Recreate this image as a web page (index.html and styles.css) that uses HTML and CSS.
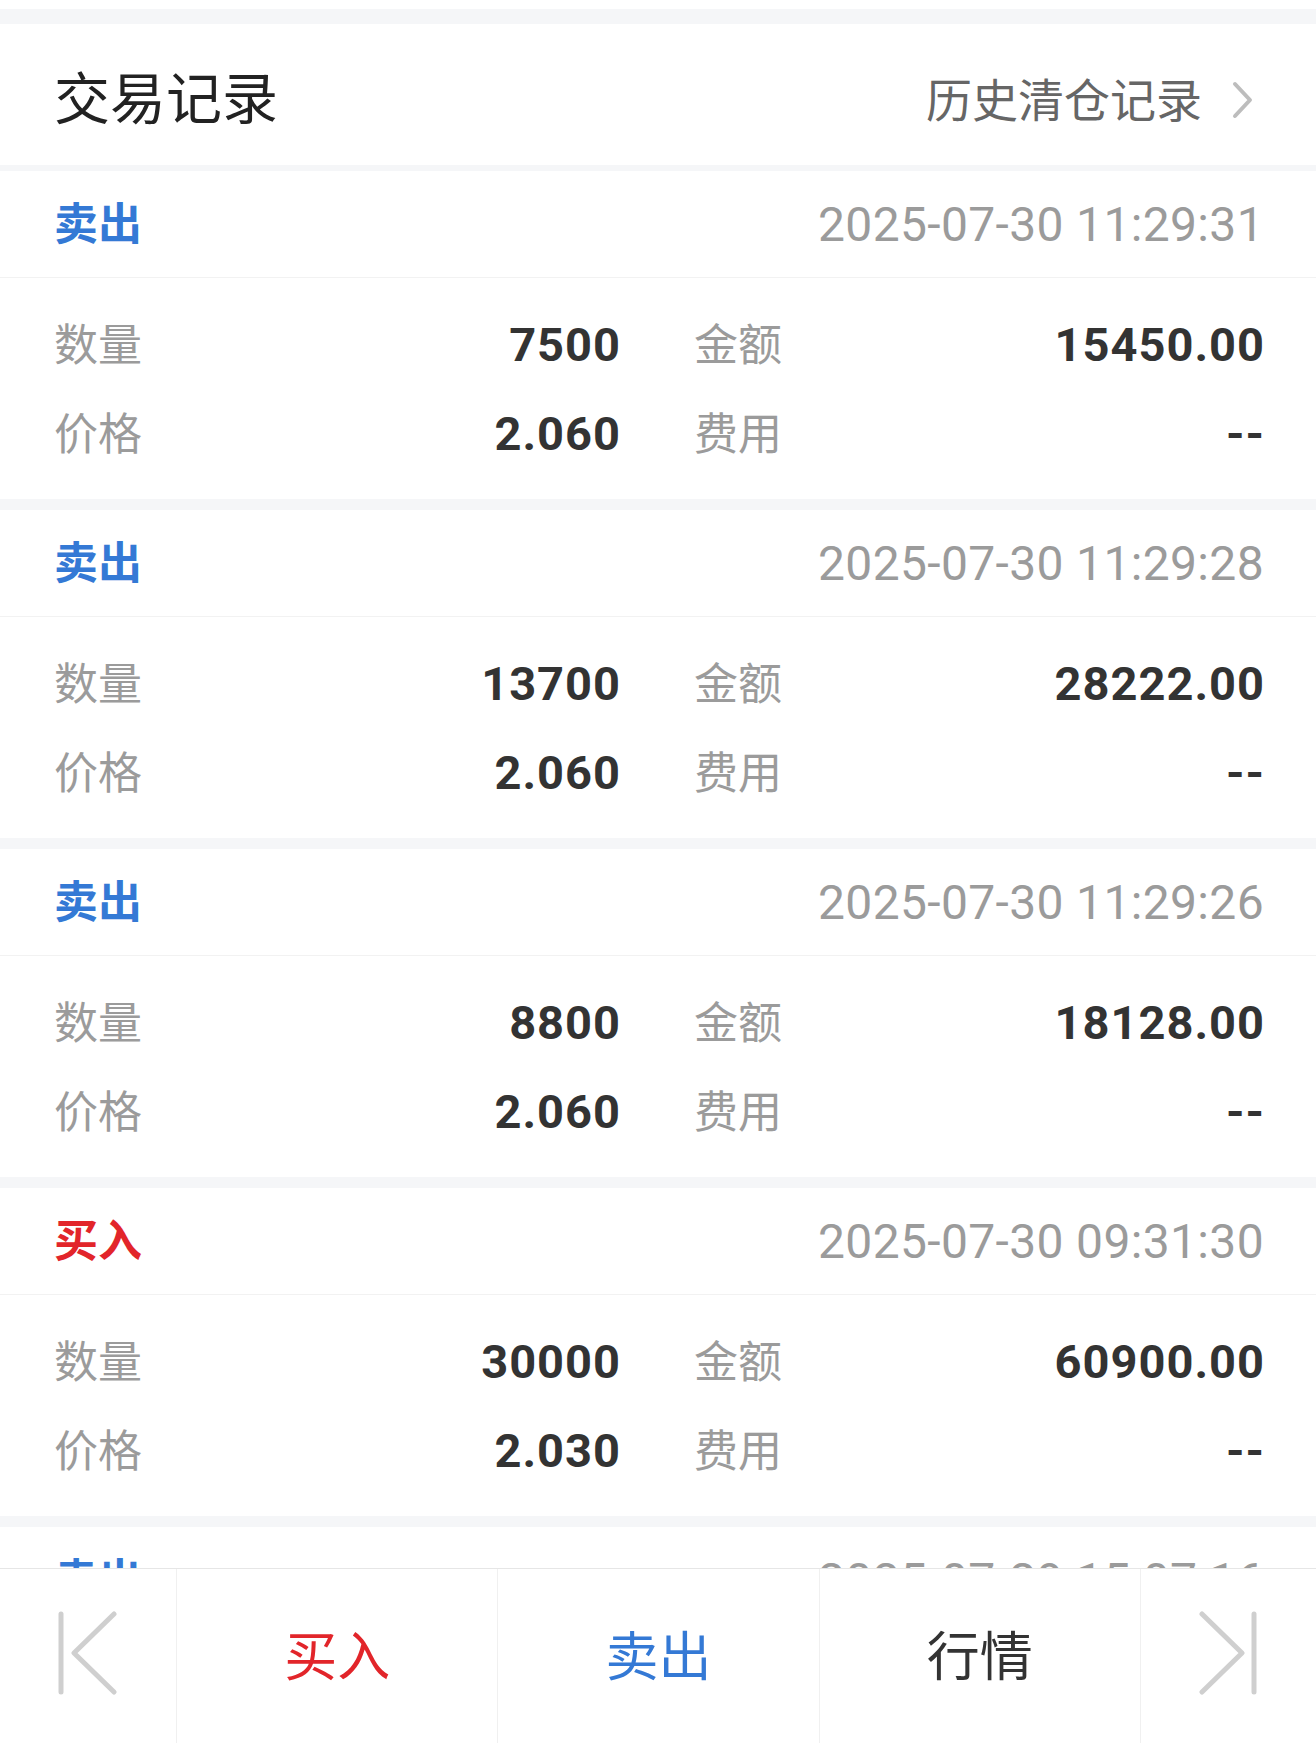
FILE: index.html
```html
<!DOCTYPE html>
<html lang="zh-CN">
<head>
  <meta charset="UTF-8">
  <title>交易记录</title>
  <link rel="stylesheet" href="styles.css">
</head>
<body>

<div class="page">
  <div class="scroll-area">
    <div class="list-head">
      <span class="list-title">交易记录</span>
      <a href="javascript:;" class="history-link">历史清仓记录
        <svg class="arrow-right" width="24" height="38" viewBox="0 0 24 38">
          <polyline points="4,3 19,19 4,35" fill="none" stroke="#bdbdbd" stroke-width="4" stroke-linecap="round" stroke-linejoin="round"/>
        </svg>
      </a>
    </div>

    <div class="trade">
      <div class="trade-top">
        <span class="trade-type sell">卖出</span>
        <span class="trade-time">2025-07-30 11:29:31</span>
      </div>
      <div class="trade-body">
        <div class="cell"><span class="label">数量</span><span class="value">7500</span></div>
        <div class="cell"><span class="label">金额</span><span class="value">15450.00</span></div>
        <div class="cell"><span class="label">价格</span><span class="value">2.060</span></div>
        <div class="cell"><span class="label">费用</span><span class="value">--</span></div>
      </div>
    </div>

    <div class="trade">
      <div class="trade-top">
        <span class="trade-type sell">卖出</span>
        <span class="trade-time">2025-07-30 11:29:28</span>
      </div>
      <div class="trade-body">
        <div class="cell"><span class="label">数量</span><span class="value">13700</span></div>
        <div class="cell"><span class="label">金额</span><span class="value">28222.00</span></div>
        <div class="cell"><span class="label">价格</span><span class="value">2.060</span></div>
        <div class="cell"><span class="label">费用</span><span class="value">--</span></div>
      </div>
    </div>

    <div class="trade">
      <div class="trade-top">
        <span class="trade-type sell">卖出</span>
        <span class="trade-time">2025-07-30 11:29:26</span>
      </div>
      <div class="trade-body">
        <div class="cell"><span class="label">数量</span><span class="value">8800</span></div>
        <div class="cell"><span class="label">金额</span><span class="value">18128.00</span></div>
        <div class="cell"><span class="label">价格</span><span class="value">2.060</span></div>
        <div class="cell"><span class="label">费用</span><span class="value">--</span></div>
      </div>
    </div>

    <div class="trade">
      <div class="trade-top">
        <span class="trade-type buy">买入</span>
        <span class="trade-time">2025-07-30 09:31:30</span>
      </div>
      <div class="trade-body">
        <div class="cell"><span class="label">数量</span><span class="value">30000</span></div>
        <div class="cell"><span class="label">金额</span><span class="value">60900.00</span></div>
        <div class="cell"><span class="label">价格</span><span class="value">2.030</span></div>
        <div class="cell"><span class="label">费用</span><span class="value">--</span></div>
      </div>
    </div>

    <!-- 被底部工具栏遮住一半的下一条 -->
    <div class="trade">
      <div class="trade-top">
        <span class="trade-type sell">卖出</span>
        <span class="trade-time">2025-07-29 15:07:16</span>
      </div>
    </div>
  </div>

  <div class="toolbar">
    <div class="tool-btn">
      <svg width="62" height="84" viewBox="0 0 62 84">
        <g fill="none" stroke="#cfcfcf" stroke-width="5" stroke-linecap="round" stroke-linejoin="round">
          <line x1="4" y1="3" x2="4" y2="81"/>
          <polyline points="57,3 17,42 57,81"/>
        </g>
      </svg>
    </div>
    <div class="tool-btn buy-btn">买入</div>
    <div class="tool-btn sell-btn">卖出</div>
    <div class="tool-btn quote-btn">行情</div>
    <div class="tool-btn">
      <svg width="62" height="84" viewBox="0 0 62 84">
        <g fill="none" stroke="#cfcfcf" stroke-width="5" stroke-linecap="round" stroke-linejoin="round">
          <line x1="56" y1="3" x2="56" y2="81"/>
          <polyline points="4,3 44,42 4,81"/>
        </g>
      </svg>
    </div>
  </div>
</div>

</body>
</html>
```

FILE: styles.css
```css
body {
  margin: 0;
  background: #fff;
  font-family: Roboto, "Noto Sans CJK SC", sans-serif;
}

.page {
  height: 1743px;
  display: flex;
  flex-direction: column;
  padding-top: 9px;
  box-sizing: border-box;
}

.scroll-area {
  flex: 1;
  overflow: hidden;
  background: #f5f6f8;
  padding-top: 15px;
}

.list-head {
  height: 141px;
  margin-bottom: 6px;
  padding: 0 54px;
  background: #fff;
  display: flex;
  align-items: center;
  justify-content: space-between;
}

.list-title {
  font-size: 56px;
  color: #222;
}

.history-link {
  display: flex;
  align-items: center;
  gap: 29px;
  padding-top: 4px;
  margin-right: 7px;
  font-size: 46px;
  color: #666;
  text-decoration: none;
}

.arrow-right {
  margin-top: 6px;
}

.trade {
  background: #fff;
  margin-bottom: 11px;
}

.trade-top {
  height: 106px;
  padding: 0 52px 0 54px;
  display: flex;
  align-items: center;
  justify-content: space-between;
  border-bottom: 1px solid #f2f2f2;
}

.trade-type {
  font-size: 44px;
  font-weight: bold;
  padding-bottom: 6px;
}

.trade-type.sell {
  color: #3479d5;
}

.trade-type.buy {
  color: #e2252a;
}

.trade-time {
  font-size: 48px;
  color: #9b9b9b;
  letter-spacing: 0.35px;
}

.trade-body {
  padding: 22px 52px 21px 54px;
  display: grid;
  grid-template-columns: 566px 1fr;
  column-gap: 74px;
}

.cell {
  height: 89px;
  display: flex;
  align-items: center;
  justify-content: space-between;
}

.label {
  font-size: 44px;
  color: #9b9b9b;
  padding-bottom: 6px;
}

.value {
  font-size: 47px;
  font-weight: bold;
  color: #333;
  letter-spacing: 1px;
  margin-right: -1px;
}

.toolbar {
  height: 175px;
  flex-shrink: 0;
  box-sizing: border-box;
  border-top: 1px solid #e6e6e6;
  background: #fff;
  display: grid;
  grid-template-columns: 176px 1fr 1fr 1fr 176px;
}

.tool-btn {
  display: flex;
  align-items: center;
  justify-content: center;
  padding-bottom: 6px;
  font-size: 53px;
  border-left: 1px solid #f0f0f0;
}

.tool-btn:first-child {
  border-left: none;
}

.buy-btn {
  color: #e2252a;
}

.sell-btn {
  color: #3479d5;
}

.quote-btn {
  color: #333;
}
```
